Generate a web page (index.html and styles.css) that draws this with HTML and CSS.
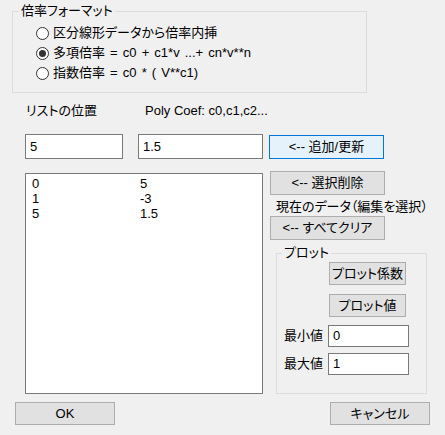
FILE: index.html
```html
<!DOCTYPE html>
<html lang="ja">
<head>
<meta charset="utf-8">
<title>倍率フォーマット</title>
<link rel="stylesheet" href="styles.css">
</head>
<body>
<div class="dialog">
  <div class="group format-group">
    <div class="group-title">倍率フォーマット</div>
    <div class="radios">
      <label class="radio"><span class="radio-dot"></span><span>区分線形データから倍率内挿</span></label>
      <label class="radio"><span class="radio-dot checked"></span><span>多項倍率 = c0 + c1*v ...+ cn*v**n</span></label>
      <label class="radio"><span class="radio-dot"></span><span>指数倍率 = c0 * ( V**c1)</span></label>
    </div>
  </div>

  <div class="labels-row">
    <span class="label-pos">リストの位置</span>
    <span class="label-coef">Poly Coef: c0,c1,c2...</span>
  </div>

  <div class="inputs-row">
    <div class="field field-pos">5</div>
    <div class="field field-coef">1.5</div>
    <div class="btn btn-default btn-wide">&lt;-- 追加/更新</div>
  </div>

  <div class="main-row">
    <div class="listbox">
      <div class="list-item"><span class="col-a">0</span><span>5</span></div>
      <div class="list-item"><span class="col-a">1</span><span>-3</span></div>
      <div class="list-item"><span class="col-a">5</span><span>1.5</span></div>
    </div>
    <div class="side">
      <div class="btn btn-wide">&lt;-- 選択削除</div>
      <div class="side-note">現在のデータ（編集を選択）</div>
      <div class="btn btn-wide btn-clear">&lt;-- すべてクリア</div>
      <div class="group plot-group">
        <div class="group-title">プロット</div>
        <div class="btn btn-plot btn-plot-first">プロット係数</div>
        <div class="btn btn-plot">プロット値</div>
        <div class="range-row range-first"><span class="range-label">最小値</span><div class="field field-range">0</div></div>
        <div class="range-row"><span class="range-label">最大値</span><div class="field field-range">1</div></div>
      </div>
    </div>
  </div>

  <div class="footer">
    <div class="btn btn-footer">OK</div>
    <div class="btn btn-footer">キャンセル</div>
  </div>
</div>
</body>
</html>
```

FILE: styles.css
```css
html, body {
  margin: 0;
  padding: 0;
  background: #f0f0f0;
}
body {
  width: 445px;
  height: 435px;
  overflow: hidden;
  font-family: "Liberation Sans", "Noto Sans CJK JP", sans-serif;
  font-feature-settings: "palt";
  font-size: 13px;
  line-height: 16px;
  color: #000;
}
.dialog {
  padding-top: 11px;
}
.group {
  box-sizing: border-box;
  border: 1px solid #dcdcdc;
}
.group-title {
  width: fit-content;
  margin-top: -9px;
  padding: 0 2px;
  background: #f0f0f0;
  height: 16px;
}
.format-group {
  margin-left: 12px;
  width: 355px;
  height: 82px;
}
.format-group .group-title {
  margin-left: 6px;
}
.radios {
  margin-top: 4px;
  padding-left: 23px;
}
.radio {
  display: flex;
  align-items: center;
  height: 20px;
  gap: 4px;
  word-spacing: 1.5px;
}
.radio-dot {
  box-sizing: border-box;
  width: 13px;
  height: 13px;
  border: 1px solid #333;
  border-radius: 50%;
  background: #fff;
  display: flex;
  align-items: center;
  justify-content: center;
}
.radio-dot.checked::after {
  content: "";
  width: 7px;
  height: 7px;
  border-radius: 50%;
  background: #333;
}
.labels-row {
  display: flex;
  margin-top: 10px;
  padding-left: 26px;
  height: 16px;
}
.label-pos {
  width: 119px;
}
.inputs-row {
  display: flex;
  align-items: center;
  margin-top: 15px;
  padding-left: 25px;
}
.field {
  box-sizing: border-box;
  border: 1px solid #7a7a7a;
  background: #fff;
  padding-left: 4px;
  display: flex;
  align-items: center;
}
.field-pos {
  width: 98px;
  height: 25px;
}
.field-coef {
  width: 125px;
  height: 25px;
  margin-left: 15px;
}
.btn {
  box-sizing: border-box;
  border: 1px solid #adadad;
  background: #e1e1e1;
  display: flex;
  align-items: center;
  justify-content: center;
}
.btn-wide {
  width: 115px;
  height: 24px;
}
.btn-default {
  border-color: #0078d7;
  background: #e5f1fb;
  margin-left: 6px;
}
.main-row {
  display: flex;
  align-items: flex-start;
  margin-top: 12px;
  padding-left: 25px;
  gap: 7px;
}
.listbox {
  box-sizing: border-box;
  margin-top: 2px;
  width: 238px;
  height: 221px;
  border: 1px solid #7a7a7a;
  background: #fff;
  padding: 2px 0 0 6px;
}
.list-item {
  display: flex;
  height: 15px;
  line-height: 15px;
}
.col-a {
  width: 108px;
}
.side {
  width: 157px;
}
.side-note {
  margin-top: 4px;
  padding-left: 6px;
  height: 16px;
  white-space: nowrap;
}
.btn-clear {
  margin-top: 1px;
}
.plot-group {
  margin-top: 13px;
  margin-left: 6px;
  width: 151px;
  height: 141px;
}
.plot-group .group-title {
  margin-left: 5px;
}
.btn-plot {
  width: 77px;
  height: 23px;
  margin-left: 52px;
  margin-top: 9px;
}
.btn-plot-first {
  margin-top: 1px;
}
.range-row {
  display: flex;
  align-items: center;
  margin-top: 6px;
  padding-left: 7px;
  gap: 5px;
}
.range-first {
  margin-top: 8px;
}
.field-range {
  width: 81px;
  height: 22px;
}
.footer {
  display: flex;
  justify-content: space-between;
  margin-top: 8px;
  padding: 0 15px;
}
.btn-footer {
  width: 100px;
  height: 23px;
}
```
